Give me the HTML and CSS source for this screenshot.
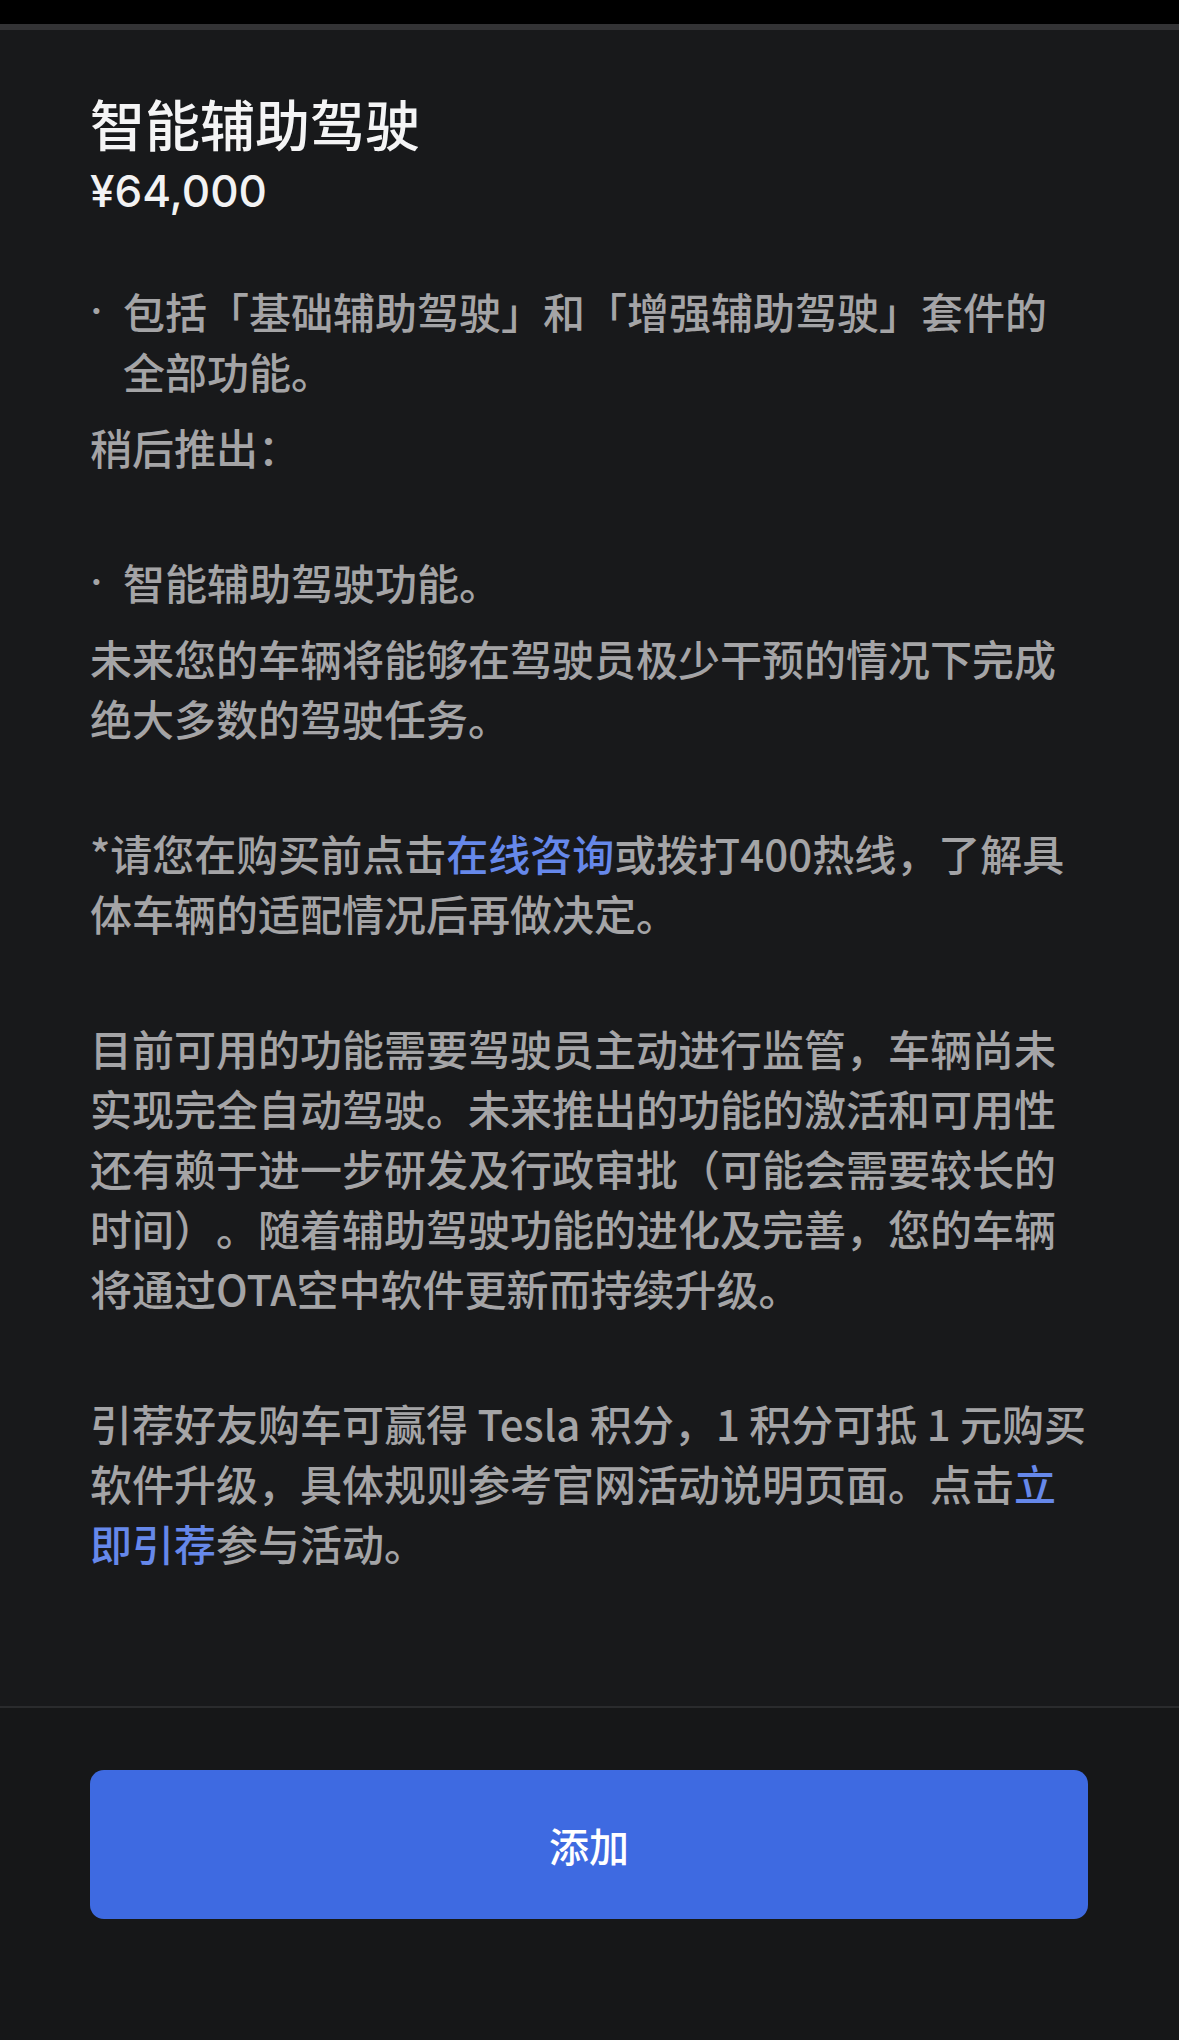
FILE: index.html
```html
<!DOCTYPE html>
<html lang="zh-CN">
<head>
<meta charset="utf-8">
<title>智能辅助驾驶</title>
<link rel="stylesheet" href="styles.css">
</head>
<body>
<div class="page">
  <div class="topbar"></div>
  <main class="content">
    <h1 class="title">智能辅助驾驶</h1>
    <div class="price">¥64,000</div>

    <section class="group">
      <div class="bullet"><span class="dot">·</span><span class="btext">包括「基础辅助驾驶」和「增强辅助驾驶」套件的全部功能。</span></div>
      <p class="para">稍后推出：</p>
    </section>

    <section class="group">
      <div class="bullet"><span class="dot">·</span><span class="btext">智能辅助驾驶功能。</span></div>
      <p class="para">未来您的车辆将能够在驾驶员极少干预的情况下完成绝大多数的驾驶任务。</p>
    </section>

    <section class="group">
      <p class="para">*请您在购买前点击<a class="link" href="#">在线咨询</a>或拨打400热线，了解具体车辆的适配情况后再做决定。</p>
    </section>

    <section class="group">
      <p class="para">目前可用的功能需要驾驶员主动进行监管，车辆尚未实现完全自动驾驶。未来推出的功能的激活和可用性还有赖于进一步研发及行政审批（可能会需要较长的时间）。随着辅助驾驶功能的进化及完善，您的车辆将通过OTA空中软件更新而持续升级。</p>
    </section>

    <section class="group">
      <p class="para">引荐好友购车可赢得 Tesla 积分，1 积分可抵 1 元购买软件升级，具体规则参考官网活动说明页面。点击<a class="link" href="#">立即引荐</a>参与活动。</p>
    </section>
  </main>
  <footer class="footer">
    <button class="add-btn" type="button">添加</button>
  </footer>
</div>
</body>
</html>
```

FILE: styles.css
```css
* {
  box-sizing: border-box;
}

html, body {
  margin: 0;
  padding: 0;
  background: #18191b;
}

body {
  font-family: "Noto Sans CJK SC", "Noto Sans", sans-serif;
  color: #a4a4a6;
  text-spacing-trim: space-all;
}

.page {
  display: flex;
  flex-direction: column;
  width: 1179px;
  height: 2040px;
  background: #18191b;
}

.topbar {
  height: 30px;
  background: #000;
  border-bottom: 6px solid #333335;
  flex: none;
}

.content {
  flex: 1;
  padding: 60px 91px 0 90px;
}

.title {
  margin: 0;
  font-size: 55px;
  line-height: 64px;
  font-weight: 500;
  color: #f4f4f5;
}

.price {
  margin-top: 9px;
  font-family: Inter, "Noto Sans", sans-serif;
  font-size: 44px;
  line-height: 56px;
  font-weight: 500;
  color: #f2f2f3;
}

.group {
  margin-top: 75px;
}

.price + .group {
  margin-top: 62px;
}

.bullet {
  display: flex;
  font-size: 42px;
  line-height: 60px;
  font-weight: 500;
}

.dot {
  flex: none;
  width: 33px;
  font-family: Inter, sans-serif;
}

.btext {
  flex: 1;
}

.para {
  margin: 16px 0 0;
  font-size: 42px;
  line-height: 60px;
  font-weight: 500;
}

.group > .para:first-child {
  margin-top: 0;
}

.link {
  color: #6688ea;
  text-decoration: none;
}

.footer {
  flex: none;
  border-top: 2px solid #2a2b2d;
  background: #161718;
  padding: 62px 91px 121px 90px;
}

.add-btn {
  display: block;
  width: 100%;
  height: 149px;
  border: none;
  border-radius: 14px;
  background: #3e6ae1;
  color: #ffffff;
  font-family: "Noto Sans CJK SC", sans-serif;
  font-size: 40px;
  font-weight: 500;
  padding: 0;
}
```
